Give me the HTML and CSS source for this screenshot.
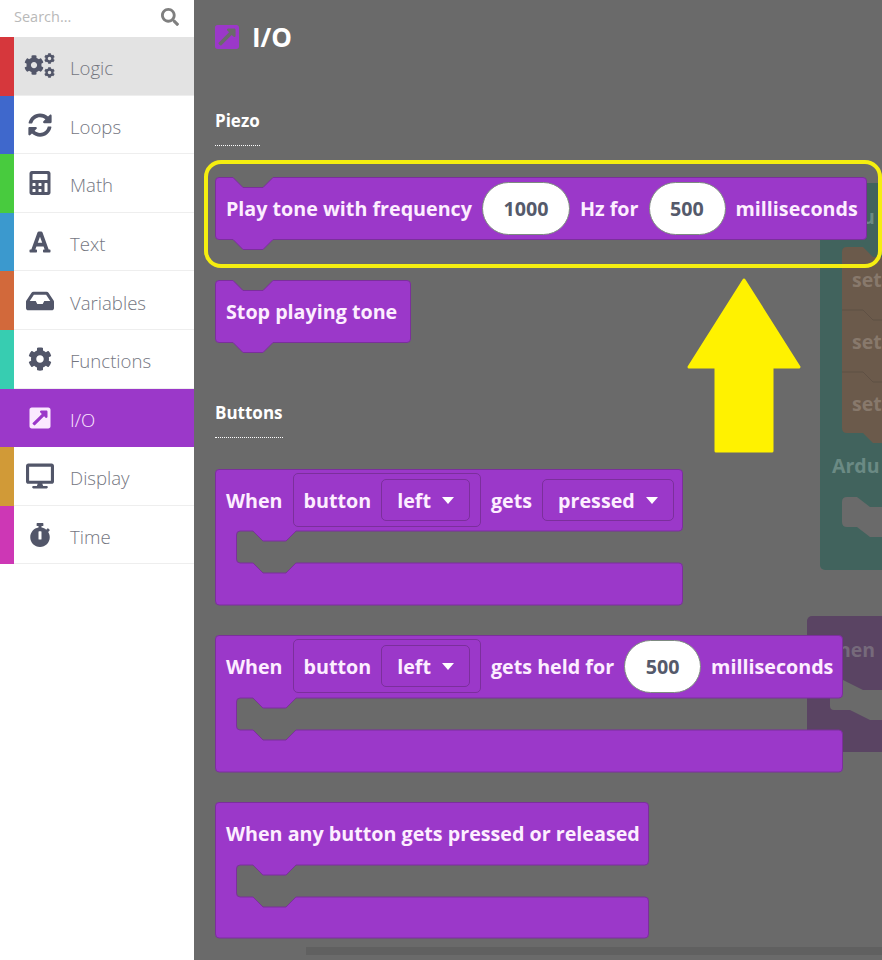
FILE: index.html
```html
<!DOCTYPE html>
<html lang="en">
<head>
  <meta charset="UTF-8">
  <title>I/O blocks</title>
  <link rel="stylesheet" href="styles.css">
</head>
<body>
  <svg class="defs" width="0" height="0">
    <symbol id="i-cog" viewBox="0 0 512 512"><path d="M487.4 315.7l-42.6-24.6c4.3-23.2 4.3-47 0-70.2l42.6-24.6c4.9-2.8 7.1-8.6 5.5-14-11.1-35.6-30-67.8-54.7-94.6-3.8-4.1-10-5.1-14.8-2.3L380.8 110c-17.9-15.4-38.5-27.3-60.8-35.1V25.8c0-5.6-3.9-10.5-9.4-11.7-36.7-8.2-74.3-7.8-109.2 0-5.5 1.2-9.4 6.1-9.4 11.7V75c-22.2 7.9-42.8 19.8-60.8 35.1L88.7 85.5c-4.9-2.8-11-1.9-14.8 2.3-24.7 26.7-43.6 58.9-54.7 94.6-1.7 5.4.6 11.2 5.5 14L67.3 221c-4.3 23.2-4.3 47 0 70.2l-42.6 24.6c-4.9 2.8-7.1 8.6-5.5 14 11.1 35.6 30 67.8 54.7 94.6 3.8 4.1 10 5.1 14.8 2.3l42.6-24.6c17.9 15.4 38.5 27.3 60.8 35.1v49.2c0 5.6 3.9 10.5 9.4 11.7 36.7 8.2 74.3 7.8 109.2 0 5.5-1.2 9.4-6.1 9.4-11.7v-49.2c22.2-7.9 42.8-19.8 60.8-35.1l42.6 24.6c4.9 2.8 11 1.9 14.8-2.3 24.7-26.7 43.6-58.9 54.7-94.6 1.5-5.5-.7-11.3-5.6-14.1zM256 336c-44.1 0-80-35.9-80-80s35.9-80 80-80 80 35.9 80 80-35.9 80-80 80z"/></symbol>
    <symbol id="i-link" viewBox="0 0 448 512"><path d="M448 80v352c0 26.51-21.49 48-48 48H48c-26.51 0-48-21.49-48-48V80c0-26.51 21.49-48 48-48h352c26.51 0 48 21.49 48 48zm-88 16H248.029c-21.313 0-32.08 25.861-16.971 40.971l31.984 31.987L67.515 364.485c-4.686 4.686-4.686 12.284 0 16.971l31.029 31.029c4.687 4.686 12.285 4.686 16.971 0l195.526-195.526 31.988 31.991C357.058 263.977 384 253.425 384 231.979V120c0-13.255-10.745-24-24-24z"/></symbol>
  </svg>

  <div class="app">
    <aside class="sidebar">
      <div class="search">
        <span class="search-text">Search...</span>
        <svg class="search-icon" viewBox="0 0 512 512"><path d="M505 442.7L405.3 343c-4.5-4.5-10.6-7-17-7H372c27.6-35.3 44-79.7 44-128C416 93.1 322.9 0 208 0S0 93.1 0 208s93.1 208 208 208c48.3 0 92.7-16.4 128-44v16.3c0 6.4 2.5 12.5 7 17l99.7 99.7c9.4 9.4 24.6 9.4 33.9 0l28.3-28.3c9.4-9.4 9.4-24.6.1-34zM208 336c-70.7 0-128-57.2-128-128 0-70.7 57.2-128 128-128 70.7 0 128 57.2 128 128 0 70.7-57.2 128-128 128z"/></svg>
      </div>

      <div class="cat logic hover">
        <span class="cat-icon">
          <svg class="cogs" viewBox="0 0 32 26">
            <use href="#i-cog" x="0" y="2" width="20" height="20"/>
            <use href="#i-cog" x="20" y="0" width="11" height="11"/>
            <use href="#i-cog" x="20" y="14" width="11" height="11"/>
          </svg>
        </span>
        <span class="cat-label">Logic</span>
      </div>
      <div class="cat loops">
        <span class="cat-icon"><svg class="ic" viewBox="0 0 512 512"><path d="M370.72 133.28C339.458 104.008 298.888 87.962 255.848 88c-77.458.068-144.328 53.178-162.791 126.85-1.344 5.363-6.122 9.15-11.651 9.15H24.103c-7.498 0-13.194-6.807-11.807-14.176C33.933 94.924 134.813 8 256 8c66.448 0 126.791 26.136 171.315 68.685L463.03 40.97C478.149 25.851 504 36.559 504 57.941V192c0 13.255-10.745 24-24 24H345.941c-21.382 0-32.09-25.851-16.971-40.971l41.75-41.749zM32 296h134.059c21.382 0 32.09 25.851 16.971 40.971l-41.75 41.75c31.262 29.273 71.835 45.319 114.876 45.28 77.418-.07 144.315-53.144 162.787-126.849 1.344-5.363 6.122-9.15 11.651-9.15h57.304c7.498 0 13.194 6.807 11.807 14.176C478.067 417.076 377.187 504 256 504c-66.448 0-126.791-26.136-171.315-68.685L48.97 471.03C33.851 486.149 8 475.441 8 454.059V320c0-13.255 10.745-24 24-24z"/></svg></span>
        <span class="cat-label">Loops</span>
      </div>
      <div class="cat math">
        <span class="cat-icon"><svg class="ic" viewBox="0 0 448 512"><path d="M400 0H48C22.4 0 0 22.4 0 48v416c0 25.6 22.4 48 48 48h352c25.6 0 48-22.4 48-48V48c0-25.6-22.4-48-48-48zM128 435.2c0 6.4-6.4 12.8-12.8 12.8H76.8c-6.4 0-12.8-6.4-12.8-12.8v-38.4c0-6.4 6.4-12.8 12.8-12.8h38.4c6.4 0 12.8 6.4 12.8 12.8v38.4zm0-128c0 6.4-6.4 12.8-12.8 12.8H76.8c-6.4 0-12.8-6.4-12.8-12.8v-38.4c0-6.4 6.4-12.8 12.8-12.8h38.4c6.4 0 12.8 6.4 12.8 12.8v38.4zm128 128c0 6.4-6.4 12.8-12.8 12.8h-38.4c-6.4 0-12.8-6.4-12.8-12.8v-38.4c0-6.4 6.4-12.8 12.8-12.8h38.4c6.4 0 12.8 6.4 12.8 12.8v38.4zm0-128c0 6.4-6.4 12.8-12.8 12.8h-38.4c-6.4 0-12.8-6.4-12.8-12.8v-38.4c0-6.4 6.4-12.8 12.8-12.8h38.4c6.4 0 12.8 6.4 12.8 12.8v38.4zm128 128c0 6.4-6.4 12.8-12.8 12.8h-38.4c-6.4 0-12.8-6.4-12.8-12.8V268.8c0-6.4 6.4-12.8 12.8-12.8h38.4c6.4 0 12.8 6.4 12.8 12.8v166.4zm0-256c0 6.4-6.4 12.8-12.8 12.8H76.8c-6.4 0-12.8-6.4-12.8-12.8V76.8C64 70.4 70.4 64 76.8 64h294.4c6.4 0 12.8 6.4 12.8 12.8v102.4z"/></svg></span>
        <span class="cat-label">Math</span>
      </div>
      <div class="cat text">
        <span class="cat-icon"><svg class="ic" viewBox="0 0 448 512"><path d="M432 416h-23.41L277.88 53.69A32 32 0 0 0 247.58 32h-47.16a32 32 0 0 0-30.3 21.69L39.41 416H16a16 16 0 0 0-16 16v32a16 16 0 0 0 16 16h128a16 16 0 0 0 16-16v-32a16 16 0 0 0-16-16h-19.58l23.3-64h152.56l23.3 64H304a16 16 0 0 0-16 16v32a16 16 0 0 0 16 16h128a16 16 0 0 0 16-16v-32a16 16 0 0 0-16-16zM176.85 272L224 142.51 271.15 272z"/></svg></span>
        <span class="cat-label">Text</span>
      </div>
      <div class="cat variables">
        <span class="cat-icon"><svg class="ic wide" viewBox="0 0 576 512"><path d="M567.938 243.908L462.25 85.374A48.003 48.003 0 0 0 422.311 64H153.689a48 48 0 0 0-39.938 21.374L8.062 243.908A47.994 47.994 0 0 0 0 270.533V400c0 26.51 21.49 48 48 48h480c26.51 0 48-21.49 48-48V270.533a47.994 47.994 0 0 0-8.062-26.625zM162.252 128h251.497l85.333 128H376l-32 64H232l-32-64H76.918l85.334-128z"/></svg></span>
        <span class="cat-label">Variables</span>
      </div>
      <div class="cat functions">
        <span class="cat-icon"><svg class="ic"><use href="#i-cog"/></svg></span>
        <span class="cat-label">Functions</span>
      </div>
      <div class="cat io active">
        <span class="cat-icon"><svg class="ic"><use href="#i-link"/></svg></span>
        <span class="cat-label">I/O</span>
      </div>
      <div class="cat display">
        <span class="cat-icon"><svg class="ic wide" viewBox="0 0 576 512"><path d="M528 0H48C21.5 0 0 21.5 0 48v320c0 26.5 21.5 48 48 48h192l-16 48h-72c-13.3 0-24 10.7-24 24s10.7 24 24 24h272c13.3 0 24-10.7 24-24s-10.7-24-24-24h-72l-16-48h192c26.5 0 48-21.5 48-48V48c0-26.5-21.5-48-48-48zm-16 352H64V64h448v288z"/></svg></span>
        <span class="cat-label">Display</span>
      </div>
      <div class="cat time">
        <span class="cat-icon"><svg class="ic" viewBox="0 0 448 512"><path d="M432 304c0 114.9-93.1 208-208 208S16 418.9 16 304c0-104 76.3-190.2 176-205.5V64h-28c-6.6 0-12-5.4-12-12V12c0-6.6 5.4-12 12-12h120c6.6 0 12 5.4 12 12v40c0 6.6-5.4 12-12 12h-28v34.5c37.5 5.8 71.7 21.6 99.7 44.6l27.5-27.5c4.7-4.7 12.3-4.7 17 0l28.3 28.3c4.7 4.7 4.7 12.3 0 17l-29.4 29.4-.6.6C419.7 223.3 432 262.2 432 304zm-176 36V188.5c0-6.6-5.4-12-12-12h-40c-6.6 0-12 5.4-12 12V340c0 6.6 5.4 12 12 12h40c6.6 0 12-5.4 12-12z"/></svg></span>
        <span class="cat-label">Time</span>
      </div>
    </aside>

    <main class="flyout">
      <!-- workspace blocks showing through behind the flyout -->
      <div class="ghost ghost-teal">
        <svg class="ghost-shape" width="62" height="387">
          <path class="brown" d="M27 64H43L53 74H62V260H53L43 250H27Q22 250 22 245V69Q22 64 27 64Z"/>
          <path class="seam" d="M22 127H43L53 137H62M22 189H43L53 199H62"/>
          <path class="hole" d="M27 314H37L50 324H62V354H50L37 344H27Q22 344 22 339V319Q22 314 27 314Z"/>
        </svg>
        <span class="ghost-u">u</span>
        <span class="ghost-set s1">set</span>
        <span class="ghost-set s2">set</span>
        <span class="ghost-set s3">set</span>
        <span class="ghost-ardu">Ardu</span>
      </div>
      <div class="ghost ghost-plum">
        <svg class="ghost-shape" width="75" height="136">
          <path class="hole" d="M23 64H36L56 74H75V104H63L43 94H27Q23 94 23 90V68Q23 64 27 64Z"/>
        </svg>
        <span class="ghost-hen">hen</span>
      </div>

      <h1 class="flyout-title">
        <svg class="title-icon"><use href="#i-link"/></svg>
        I/O
      </h1>

      <h2 class="section first">Piezo</h2>

      <div class="highlight">
        <div class="block tone">
          <svg class="shape" width="652" height="74"><path d="M4 .5H18L28 10.5H48L58 .5H648Q651.5 .5 651.5 4V59Q651.5 62.500 648 62.500H58L48 72.500H28L18 62.500H4Q.5 62.500 .5 59V4Q.5 .5 4 .5Z"/></svg>
          <span>Play tone with frequency</span>
          <span class="num n1000">1000</span>
          <span>Hz for</span>
          <span class="num n500">500</span>
          <span>milliseconds</span>
        </div>
      </div>

      <div class="block stop">
        <svg class="shape" width="196" height="74"><path d="M4 .5H18L28 10.5H48L58 .5H192Q195.500 .5 195.500 4V59Q195.500 62.500 192 62.500H58L48 72.500H28L18 62.500H4Q.5 62.500 .5 59V4Q.5 .5 4 .5Z"/></svg>
        <span>Stop playing tone</span>
      </div>

      <h2 class="section">Buttons</h2>

      <div class="block event pressed">
        <svg class="shape" width="468" height="137"><path d="M4 .5H464Q467.500 .5 467.500 4V58Q467.500 62 464 62H81L71 72H48L38 62H25Q21.500 62 21.500 66V90Q21.500 94 25 94H38L48 104H71L81 94H464Q467.500 94 467.500 98V132Q467.500 136 464 136H4Q.5 136 .5 132V4Q.5 .5 4 .5Z"/></svg>
        <div class="event-row">
          <span>When</span>
          <span class="nest">button <span class="drop">left <i class="caret"></i></span></span>
          <span>gets</span>
          <span class="drop solo">pressed <i class="caret"></i></span>
        </div>
      </div>

      <div class="block event held">
        <svg class="shape" width="628" height="138"><path d="M4 .5H624Q627.500 .5 627.500 4V59Q627.500 63 624 63H81L71 73H48L38 63H25Q21.500 63 21.500 67V91Q21.500 95 25 95H38L48 105H71L81 95H624Q627.500 95 627.500 99V133Q627.500 137 624 137H4Q.5 137 .5 133V4Q.5 .5 4 .5Z"/></svg>
        <div class="event-row">
          <span>When</span>
          <span class="nest">button <span class="drop">left <i class="caret"></i></span></span>
          <span>gets held for</span>
          <span class="num n500">500</span>
          <span>milliseconds</span>
        </div>
      </div>

      <div class="block event any">
        <svg class="shape" width="434" height="137"><path d="M4 .5H430Q433.500 .5 433.500 4V59Q433.500 63 430 63H81L71 73H48L38 63H25Q21.500 63 21.500 67V91Q21.500 95 25 95H38L48 105H71L81 95H430Q433.500 95 433.500 99V132Q433.500 136 430 136H4Q.5 136 .5 132V4Q.5 .5 4 .5Z"/></svg>
        <div class="event-row">
          <span>When any button gets pressed or released</span>
        </div>
      </div>

      <div class="scrollbar"></div>

      <!-- tutorial arrow pointing at the highlighted block -->
      <svg class="arrow" width="116" height="176" viewBox="0 0 116 176"><path d="M57 2L112 89H85V173H29V89H2Z"/></svg>
    </main>
  </div>
</body>
</html>
```

FILE: styles.css
```css
* {
  box-sizing: border-box;
}

body {
  margin: 0;
  background-color: #fff;
  font-family: 'Open Sans', 'Noto Sans', sans-serif;
}

.defs {
  position: absolute;
}

.app {
  display: flex;
  width: 882px;
  height: 960px;
  overflow: hidden;
}

/* sidebar */
.sidebar {
  width: 194px;
  flex-shrink: 0;
  background-color: #fff;
}

.search {
  display: flex;
  align-items: center;
  justify-content: space-between;
  height: 37px;
  padding: 0 15px 4px 14px;
}

.search-text {
  font-size: 14.5px;
  color: #b9b9b9;
}

.search-icon {
  width: 18px;
  height: 18px;
  fill: #7f7f7f;
}

.cat {
  display: flex;
  align-items: center;
  height: 58.6px;
  border-left: 14px solid #999;
  background-image: linear-gradient(#eee, #eee);
  background-repeat: no-repeat;
  background-position: bottom;
  background-size: 100% 1px;
  font-size: 18.6px;
  font-weight: 300;
  color: #74767f;
}

.cat-icon {
  display: flex;
  justify-content: center;
  width: 52px;
  margin-right: 4px;
  fill: #525669;
}

.cat-label {
  margin-top: 3px;
}

.ic {
  width: 24px;
  height: 24px;
}

.ic.wide {
  width: 28px;
  height: 28px;
}

.cogs {
  width: 32px;
  height: 26px;
}

.logic { border-left-color: #d6373c; }
.loops { border-left-color: #3f68cc; }
.math { border-left-color: #48cb3e; }
.text { border-left-color: #3b99ce; }
.variables { border-left-color: #d2693b; }
.functions { border-left-color: #37cdb1; }
.display { border-left-color: #d19a37; }
.time { border-left-color: #cd37b5; }

.hover {
  background-color: #e3e3e3;
}

.active {
  border-left-color: #9b38c9;
  background-color: #9b38c9;
  background-image: none;
  color: #fbe9ff;
}

.active .cat-icon {
  fill: #fbe9ff;
}

/* flyout */
.flyout {
  position: relative;
  flex: 1;
  padding: 25px 0 0 21px;
  background-color: #6a6a6a;
  color: #fff;
}

.flyout-title {
  display: flex;
  align-items: center;
  gap: 13px;
  height: 24px;
  margin: 0;
  font-size: 26px;
  font-weight: 700;
}

.title-icon {
  width: 24px;
  height: 28px;
  fill: #9b38c9;
}

.section {
  width: max-content;
  margin: 58px 0 31px;
  padding-bottom: 12px;
  border-bottom: 1px dotted #fff;
  font-size: 17px;
  font-weight: 700;
  line-height: 24px;
}

.section.first {
  margin: 60px 0 14px;
}

.highlight {
  position: relative;
  width: 678px;
  height: 108px;
  margin-left: -11px;
  margin-bottom: 12px;
  padding: 13px 7px;
  border: 4px solid #f5ee10;
  border-radius: 17px;
}

/* blocks */
.block {
  position: relative;
  display: flex;
  align-items: center;
  gap: 10px;
  height: 63px;
  padding-left: 11px;
  font-size: 19.7px;
  font-weight: 700;
  color: #fdeeff;
  white-space: nowrap;
}

.block > span,
.event-row {
  position: relative;
}

.shape {
  position: absolute;
  top: 0;
  left: 0;
  fill: #9b38c9;
  stroke: #7b2f9c;
  stroke-linejoin: round;
}

.tone { width: 652px; }
.stop { width: 196px; }

.event {
  align-items: flex-start;
  height: 137px;
  margin-bottom: 30px;
}

.pressed { width: 468px; height: 136px; }
.held { width: 628px; }
.any { width: 434px; }

.event-row {
  display: flex;
  align-items: center;
  gap: 10px;
  height: 62px;
}

.num {
  display: flex;
  align-items: center;
  justify-content: center;
  height: 53px;
  border: 1px solid #7d8a80;
  border-radius: 27px;
  background-color: #fff;
  color: #555a6b;
}

.n1000 { width: 88px; }
.n500 { width: 77px; }

.nest {
  display: flex;
  align-items: center;
  gap: 10px;
  height: 54px;
  padding: 0 10px;
  border: 1px solid #7b2f9c;
  border-radius: 5px;
}

.drop {
  display: flex;
  align-items: center;
  gap: 11px;
  height: 42px;
  padding: 0 15px;
  border: 1px solid #7b2f9c;
  border-radius: 5px;
}

.caret {
  width: 0;
  height: 0;
  border-left: 6.5px solid transparent;
  border-right: 6.5px solid transparent;
  border-top: 7px solid #fff;
}

.scrollbar {
  position: absolute;
  left: 112px;
  right: 0;
  bottom: 5px;
  height: 8px;
  background-color: #606060;
}

.arrow {
  position: absolute;
  left: 493px;
  top: 278px;
  fill: #fff200;
  stroke: #fff200;
  stroke-width: 3;
  stroke-linejoin: round;
}

/* dimmed workspace behind the flyout */
.ghost {
  position: absolute;
  font-size: 19.5px;
  font-weight: 700;
}

.ghost > span {
  position: absolute;
}

.ghost-shape {
  position: absolute;
  top: 0;
  left: 0;
}

.brown { fill: #6b5a4b; }
.seam { fill: none; stroke: #5f5044; }
.hole { fill: #6a6a6a; }

.ghost-teal {
  left: 626px;
  top: 183px;
  width: 70px;
  height: 387px;
  border-radius: 5px;
  background-color: #41635d;
  color: #6b8a84;
}

.ghost-u {
  left: 42px;
  top: 20px;
}

.ghost-set {
  left: 32px;
  color: #88796c;
}

.s1 { top: 83px; }
.s2 { top: 145px; }
.s3 { top: 207px; }

.ghost-ardu {
  left: 12px;
  top: 269px;
}

.ghost-plum {
  left: 613px;
  top: 616px;
  width: 75px;
  height: 136px;
  border-radius: 5px 0 0 5px;
  background-color: #5a4463;
  color: #766a7b;
}

.ghost-hen {
  left: 31px;
  top: 20px;
}
```
